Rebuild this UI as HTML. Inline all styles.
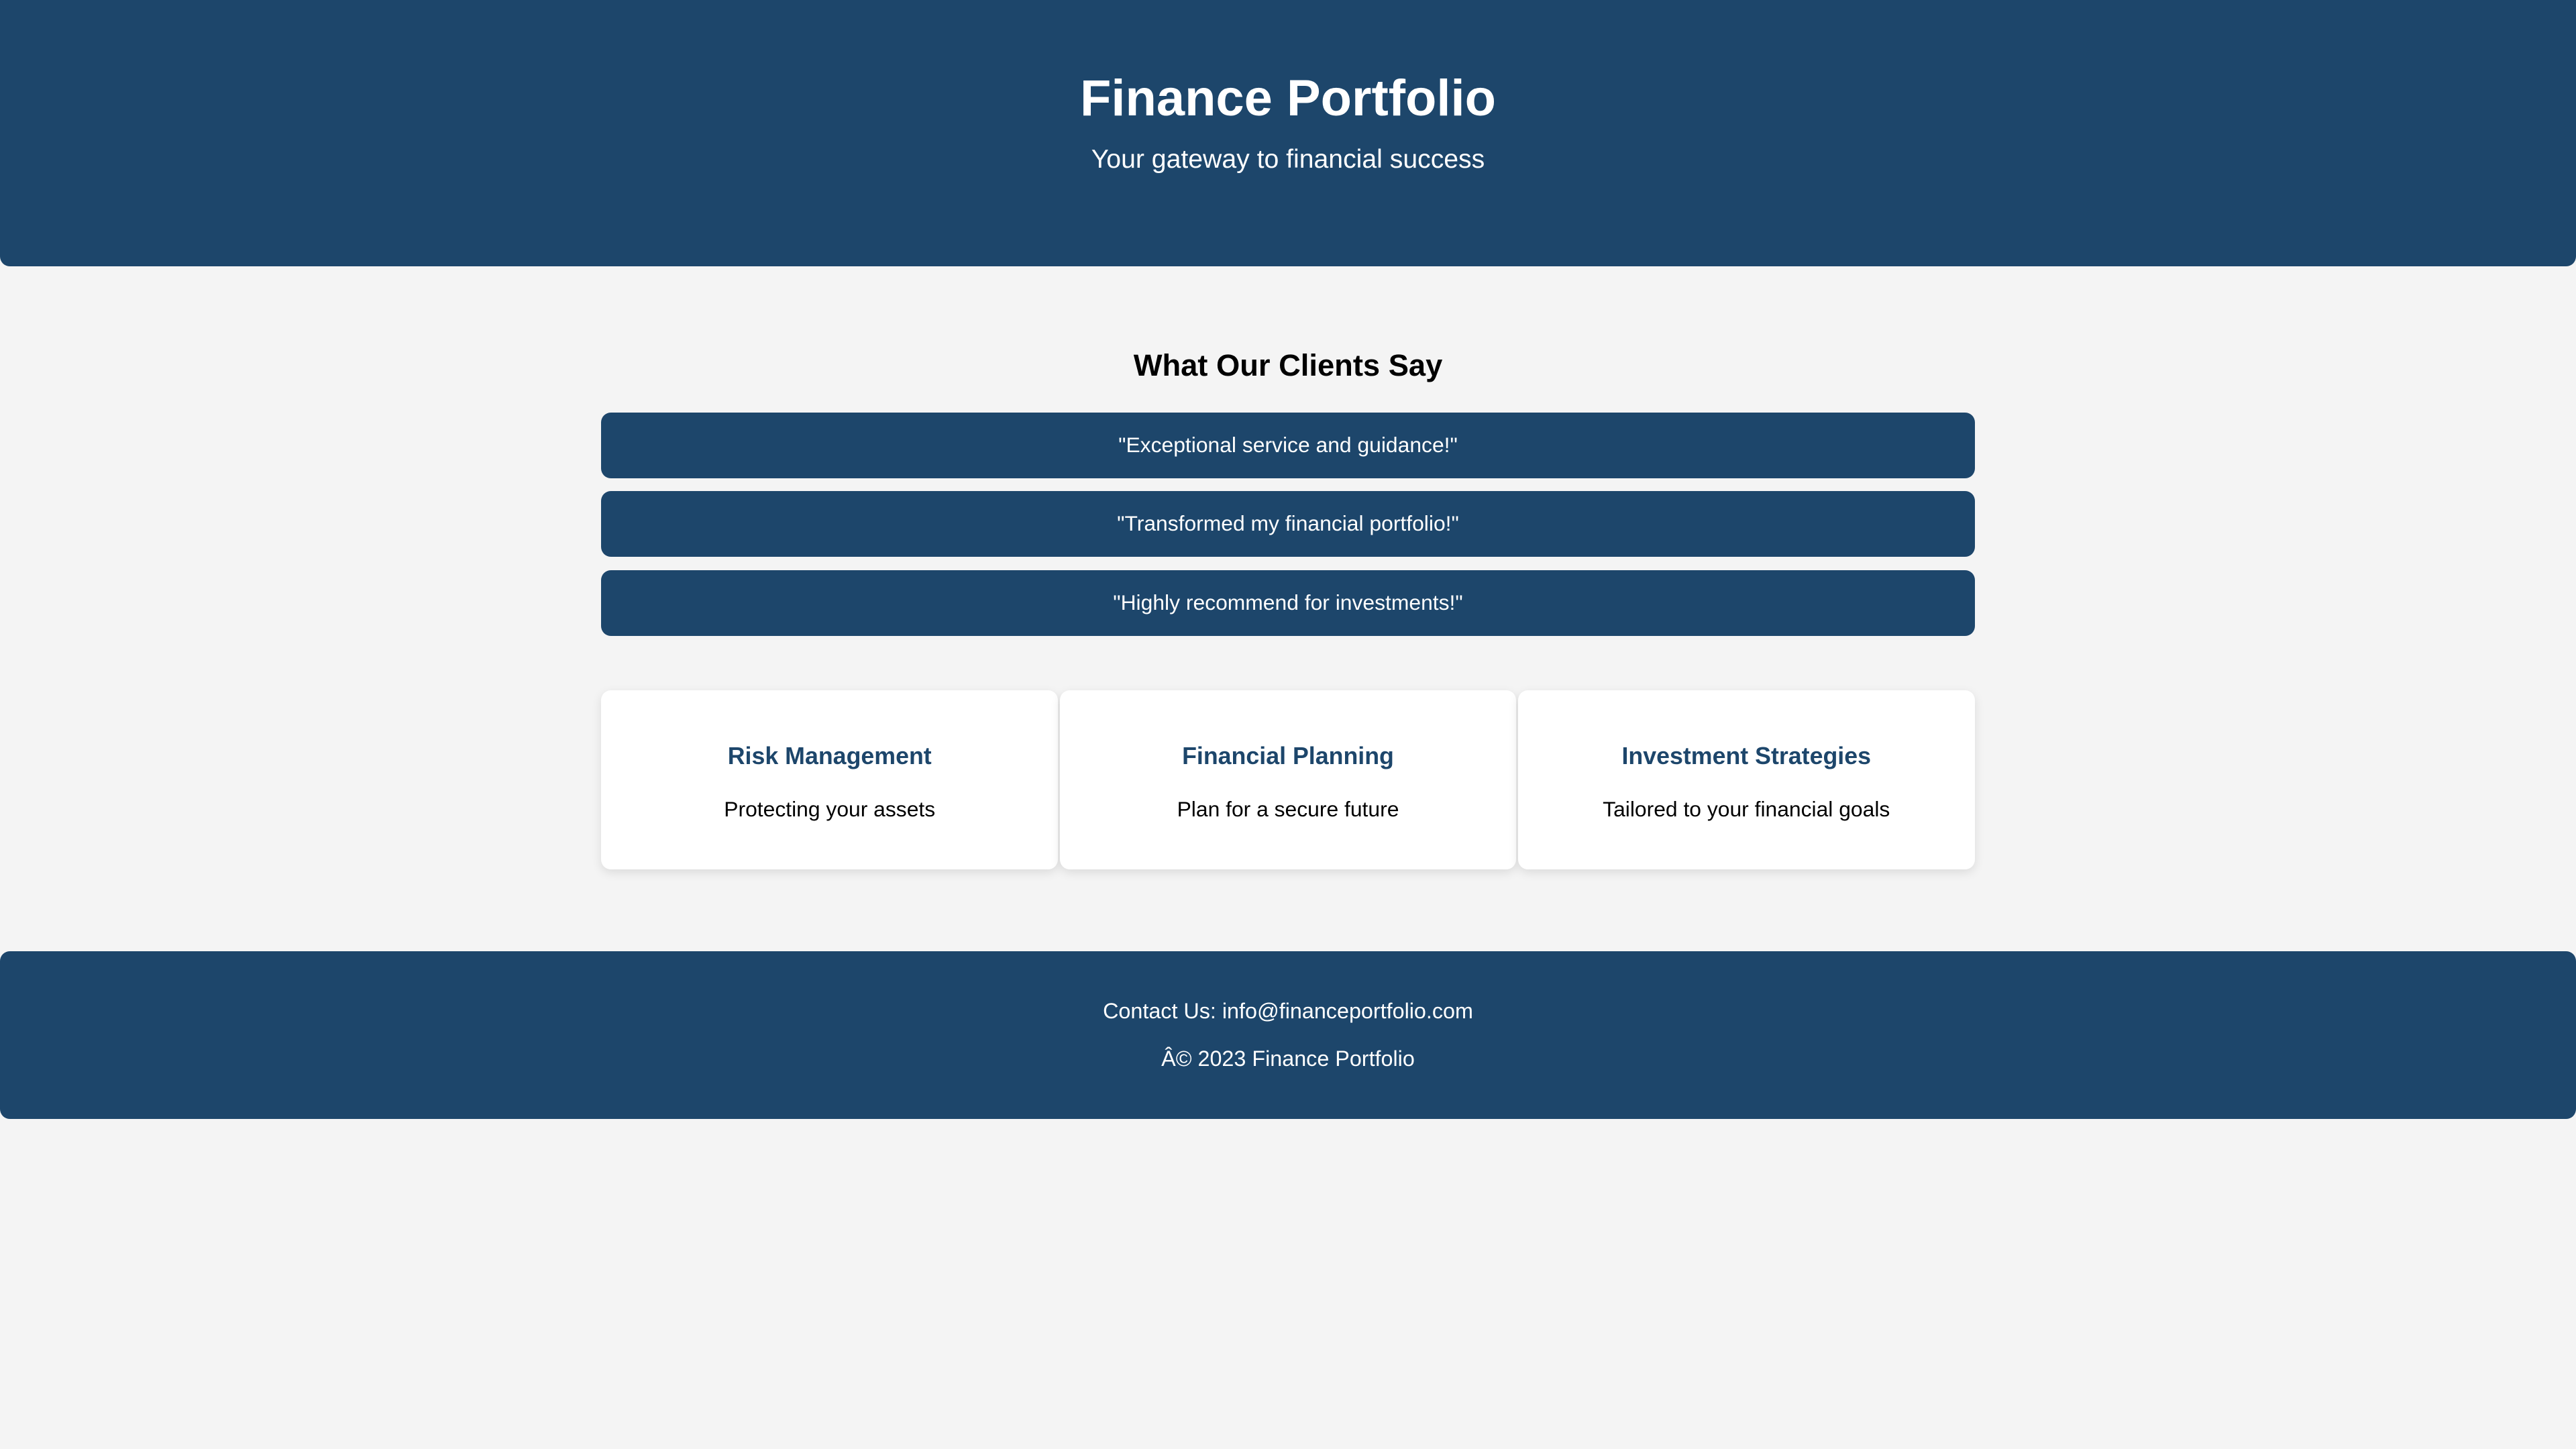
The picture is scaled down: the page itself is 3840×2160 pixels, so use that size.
<!DOCTYPE html>
<html><head><meta charset="utf-8"><style>
html,body{margin:0;padding:0;}
body{background:#f4f4f4;font-family:"Liberation Sans",sans-serif;width:1568px;height:882px;zoom:2.44898;overflow:hidden;position:relative;}
.hdr{position:absolute;left:0;top:0;width:1568px;height:162px;background:#1d466b;border-radius:0 0 6px 6px;color:#fff;text-align:center;}
.hdr h1{position:absolute;left:0;right:0;top:42px;margin:0;font-size:31px;font-weight:bold;}
.hdr p{position:absolute;left:0;right:0;top:88px;margin:0;font-size:16px;}
h2{position:absolute;left:0;right:0;top:212px;margin:0;text-align:center;font-size:18.5px;font-weight:bold;color:#000;}
.t{position:absolute;left:366px;width:836px;height:40px;background:#1d466b;border-radius:6px;color:#fff;font-size:13px;text-align:center;line-height:40px;}
.c{position:absolute;top:420px;width:278px;height:109px;background:#fff;border-radius:6px;box-shadow:0 2px 6px rgba(0,0,0,.1);text-align:center;}
.c b{position:absolute;left:0;right:0;top:32px;font-size:14.6px;color:#1d466b;}
.c span{position:absolute;left:0;right:0;top:65px;font-size:13px;color:#000;}
.f{position:absolute;left:0;top:579px;width:1568px;height:102px;background:#1d466b;border-radius:6px;color:#fff;text-align:center;font-size:13.2px;}
.f div{position:absolute;left:0;right:0;}
</style></head><body>
<div class="hdr"><h1>Finance Portfolio</h1><p>Your gateway to financial success</p></div>
<h2>What Our Clients Say</h2>
<div class="t" style="top:251px">"Exceptional service and guidance!"</div>
<div class="t" style="top:299px">"Transformed my financial portfolio!"</div>
<div class="t" style="top:347px">"Highly recommend for investments!"</div>
<div class="c" style="left:366px"><b>Risk Management</b><span>Protecting your assets</span></div>
<div class="c" style="left:645px"><b>Financial Planning</b><span>Plan for a secure future</span></div>
<div class="c" style="left:924px"><b>Investment Strategies</b><span>Tailored to your financial goals</span></div>
<div class="f"><div style="top:29px">Contact Us: info@financeportfolio.com</div><div style="top:58px">Â© 2023 Finance Portfolio</div></div>
</body></html>
